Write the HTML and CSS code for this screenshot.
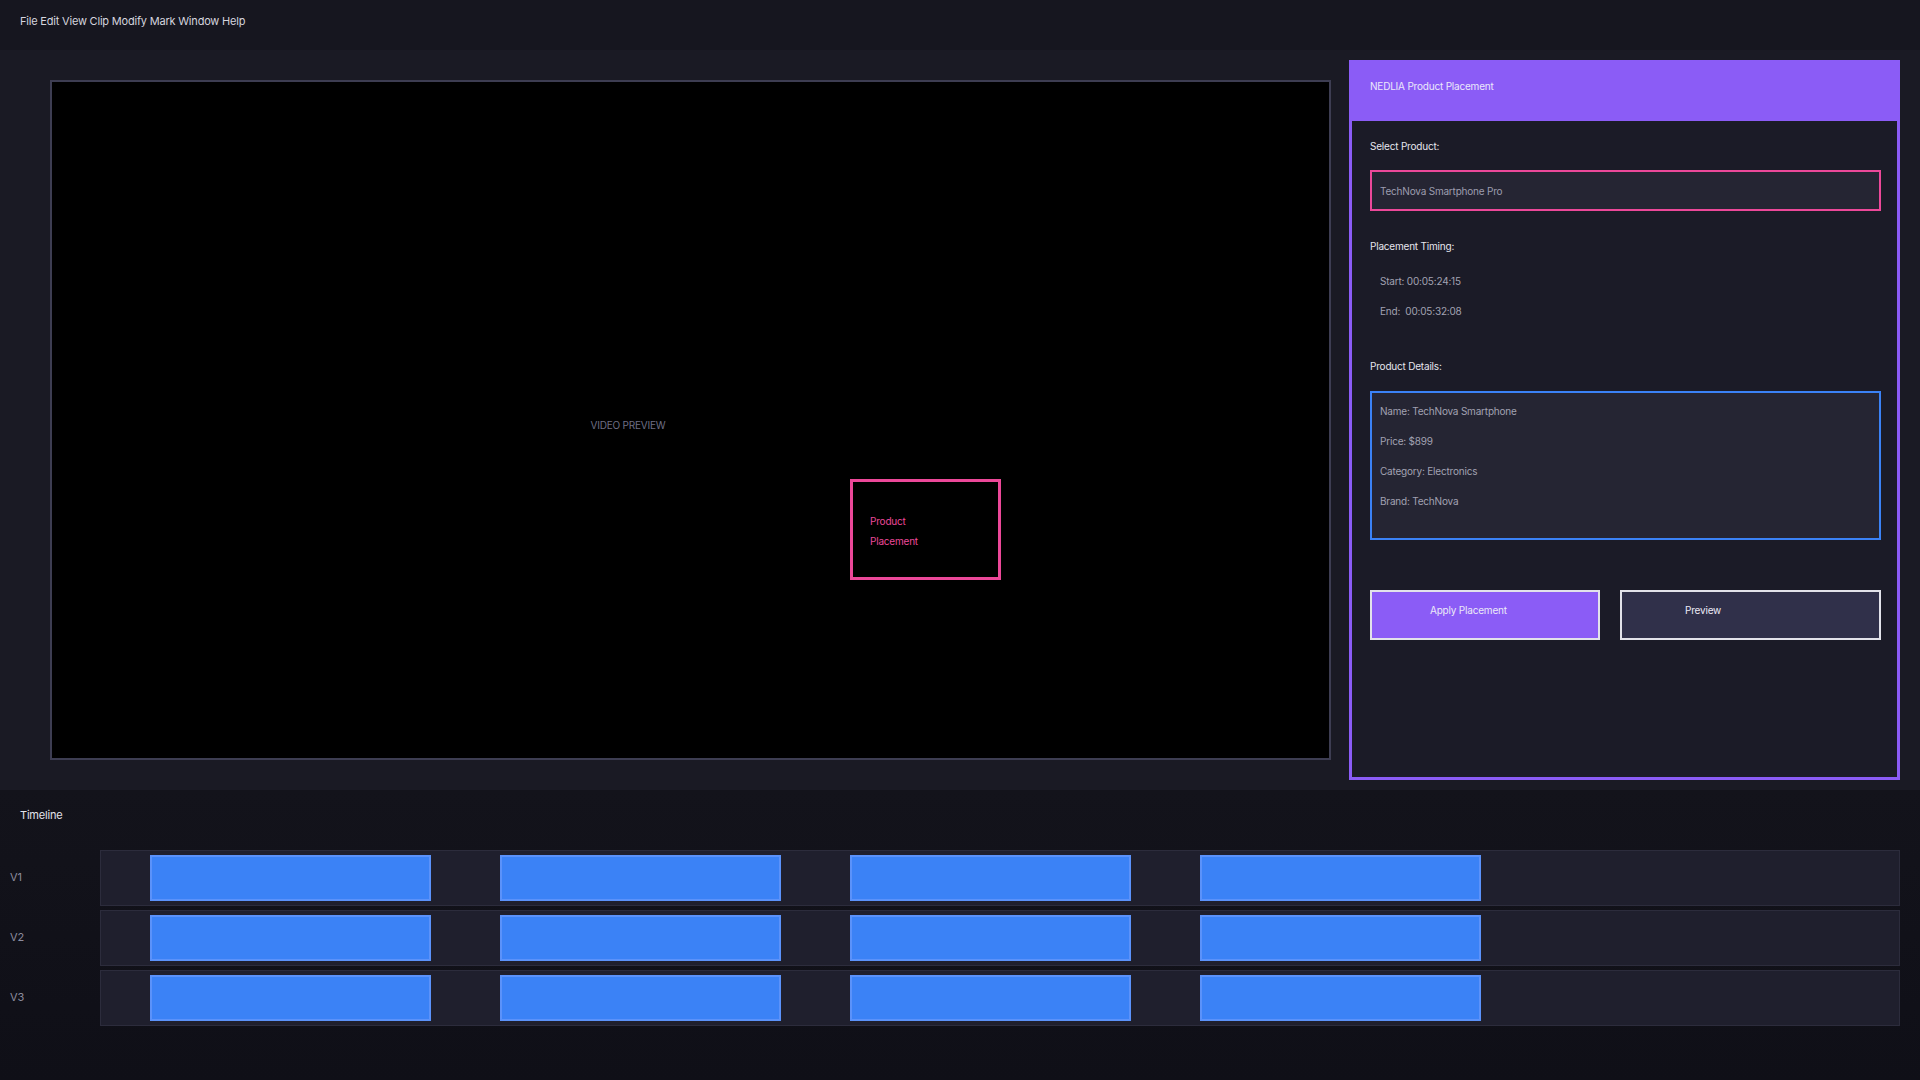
FILE: index.html
```html
<!DOCTYPE html>
<html>
<head>
<meta charset="utf-8">
<link rel="stylesheet" href="styles.css">
</head>
<body>
<div class="app">
  <header class="menubar">File Edit View Clip Modify Mark Window Help</header>
  <main class="workspace">
    <section class="viewer">
      <div class="video">
        <div class="video-label">VIDEO PREVIEW</div>
        <div class="placement-box">
          <div>Product</div>
          <div>Placement</div>
        </div>
      </div>
    </section>
    <aside class="panel">
      <div class="panel-header">NEDLIA Product Placement</div>
      <div class="panel-body">
        <div class="label first">Select Product:</div>
        <div class="select">TechNova Smartphone Pro</div>
        <div class="label timing-label">Placement Timing:</div>
        <div class="timing">Start: 00:05:24:15</div>
        <div class="timing">End:&nbsp; 00:05:32:08</div>
        <div class="label details-label">Product Details:</div>
        <div class="details">
          <div class="detail">Name: TechNova Smartphone</div>
          <div class="detail">Price: $899</div>
          <div class="detail">Category: Electronics</div>
          <div class="detail">Brand: TechNova</div>
        </div>
        <div class="actions">
          <button class="btn btn-apply">Apply Placement</button>
          <button class="btn btn-preview">Preview</button>
        </div>
      </div>
    </aside>
  </main>
  <section class="timeline">
    <div class="timeline-title">Timeline</div>
    <div class="tracks">
      <div class="track">
        <div class="track-label">V1</div>
        <div class="track-lane">
          <div class="clip"></div><div class="clip"></div><div class="clip"></div><div class="clip"></div>
        </div>
      </div>
      <div class="track">
        <div class="track-label">V2</div>
        <div class="track-lane">
          <div class="clip"></div><div class="clip"></div><div class="clip"></div><div class="clip"></div>
        </div>
      </div>
      <div class="track">
        <div class="track-label">V3</div>
        <div class="track-lane">
          <div class="clip"></div><div class="clip"></div><div class="clip"></div><div class="clip"></div>
        </div>
      </div>
    </div>
  </section>
</div>
</body>
</html>
```
FILE: styles.css
```css
* { box-sizing: border-box; }
html, body { margin: 0; padding: 0; }
body {
  width: 1920px;
  height: 1080px;
  overflow: hidden;
  background: #1a1a24;
  font-family: Inter, "Noto Sans", sans-serif;
  font-size: 10px;
  letter-spacing: -0.2px;
  color: #e4e4ee;
}
.app { display: flex; flex-direction: column; height: 1080px; }

.menubar {
  height: 50px;
  background: #16161f;
  padding: 14px 0 0 20px;
  color: #d4d4de;
  font-size: 11px;
  line-height: 14px;
}

.workspace {
  display: flex;
  height: 740px;
  padding: 10px 20px 0 30px;
  background: #1a1a24;
}
.viewer { flex: 1; padding: 20px 18px 20px 20px; height: 720px; }
.video {
  position: relative;
  height: 680px;
  background: #000;
  border: 2px solid #3d3d52;
}
.video-label {
  position: absolute;
  left: calc(50% - 100px);
  top: calc(50% - 2px);
  color: #6e6e84;
  line-height: 14px;
}
.placement-box {
  position: absolute;
  left: 798px;
  top: 397px;
  width: 151px;
  height: 101px;
  border: 3px solid #ec4899;
  color: #ec4899;
  padding: 29px 0 0 17px;
  line-height: 20px;
}

.panel {
  width: 551px;
  height: 720px;
  border: 3px solid #8b5cf6;
  background: #1b1b27;
  display: flex;
  flex-direction: column;
}
.panel-header {
  height: 58px;
  background: #8b5cf6;
  padding: 16px 0 0 18px;
  line-height: 14px;
  color: #ece8fb;
}
.panel-body { padding: 0 16px 0 18px; }
.label { line-height: 14px; color: #e6e6ee; }
.label.first { margin-top: 18px; }
.select {
  margin-top: 17px;
  height: 41px;
  background: #252533;
  border: 2px solid #ec4899;
  padding: 12px 0 0 8px;
  line-height: 14px;
  color: #9d9daf;
}
.timing-label { margin-top: 28px; }
.timing {
  padding-left: 10px;
  line-height: 14px;
  color: #a2a2b2;
  margin-top: 21px;
}
.timing + .timing { margin-top: 16px; }
.details-label { margin-top: 41px; }
.details {
  margin-top: 18px;
  height: 149px;
  background: #252533;
  border: 2px solid #3b82f6;
  padding: 10px 0 0 8px;
}
.detail { line-height: 14px; color: #a2a2b2; height: 30px; padding-top: 1px; }
.actions {
  display: flex;
  gap: 20px;
  margin-top: 50px;
}
.btn {
  height: 50px;
  border: 2px solid #e2e2ea;
  font-family: inherit;
  font-size: 10px;
  letter-spacing: -0.2px;
  color: #eceaf6;
  text-align: left;
  padding: 0 0 10px 0;
  line-height: 14px;
}
.btn-apply { width: 230px; background: #8b5cf6; padding-left: 58px; }
.btn-preview { flex: 1; background: #30304a; padding-left: 63px; }

.timeline {
  flex: 1;
  background: linear-gradient(#13131b, #0f0f17);
  padding: 18px 20px 0 10px;
}
.timeline-title { padding-left: 10px; line-height: 14px; color: #e2e2ea; font-size: 11px; }
.tracks { margin-top: 28px; display: flex; flex-direction: column; gap: 4px; }
.track { display: flex; align-items: center; height: 56px; }
.track-label { width: 90px; color: #8c8c9e; line-height: 14px; font-size: 11px; padding-bottom: 2px; }
.track-lane {
  flex: 1;
  height: 56px;
  background: #1f1f2d;
  border: 1px solid #2c2c3c;
  display: flex;
  align-items: center;
  padding-left: 49px;
  gap: 69px;
}
.clip {
  width: 281px;
  height: 46px;
  background: #3b82f6;
  border: 2px solid #5b92fa;
}
```
